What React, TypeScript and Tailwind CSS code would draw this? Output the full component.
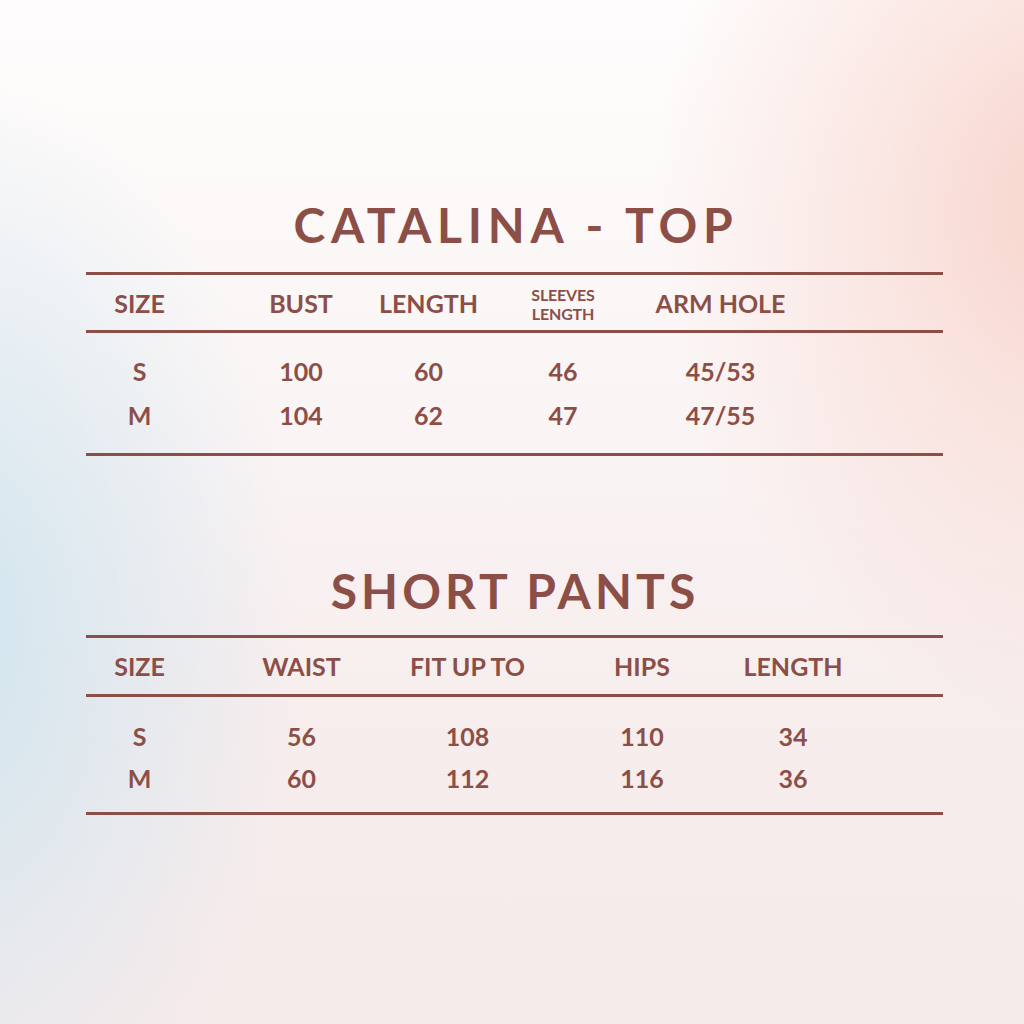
import React from "react";

const C = "text-[#8b4f48]";

function Line() {
  return <div className="h-[3px] w-full bg-[#8b4f48]" />;
}

function Cell({ children }: { children: React.ReactNode }) {
  return <div className="flex justify-center whitespace-nowrap">{children}</div>;
}

type TableProps = {
  cols: string;
  headers: React.ReactNode[];
  rows: string[][];
  headerH: string;
  bodyPt: string;
  bodyPb: string;
  rowH: string;
};

function SizeTable({ cols, headers, rows, headerH, bodyPt, bodyPb, rowH }: TableProps) {
  return (
    <div className="w-[857px] ml-[86px] flex flex-col">
      <Line />
      <div className={`grid ${cols} ${headerH} items-center text-[25px] font-bold pt-[2px]`}>
        {headers.map((h, i) => (
          <Cell key={i}>{h}</Cell>
        ))}
      </div>
      <Line />
      <div className={`flex flex-col ${bodyPt} ${bodyPb}`}>
        {rows.map((r, i) => (
          <div key={i} className={`grid ${cols} ${rowH} items-center text-[25px] font-bold`}>
            {r.map((v, j) => (
              <Cell key={j}>{v}</Cell>
            ))}
          </div>
        ))}
      </div>
      <Line />
    </div>
  );
}

export default function App() {
  return (
    <div
      className={`w-[1024px] h-[1024px] overflow-hidden font-['Lato',sans-serif] ${C} bg-[radial-gradient(420px_520px_at_105%_20%,#f8d3cb_0%,rgba(248,211,203,0.55)_40%,rgba(248,211,203,0)_100%),radial-gradient(360px_560px_at_-6%_62%,#cfe5ef_0%,rgba(207,229,239,0.55)_45%,rgba(207,229,239,0)_100%),linear-gradient(to_bottom,#fefcfc_0%,#fbf6f6_35%,#f7eded_70%,#f6ebeb_100%)]`}
    >
      <div className="pt-[201px] flex flex-col">
        <div className="h-[48px] leading-[48px] text-[48px] font-bold tracking-[0.12em] text-center pl-[8px]">
          CATALINA - TOP
        </div>
        <div className="mt-[23px]">
          <SizeTable
            cols="grid-cols-[107px_216px_39px_230px_85px_1fr]"
            headers={[
              "SIZE",
              "BUST",
              "LENGTH",
              <div className="flex flex-col items-center text-[16px] leading-[19px] tracking-[-0.01em]">
                <span>SLEEVES</span>
                <span>LENGTH</span>
              </div>,
              "ARM HOLE",
              "",
            ]}
            rows={[
              ["S", "100", "60", "46", "45/53", ""],
              ["M", "104", "62", "47", "47/55", ""],
            ]}
            headerH="h-[55px]"
            bodyPt="pt-[17px]"
            bodyPb="pb-[15px]"
            rowH="h-[44px]"
          />
        </div>
        <div className="mt-[111px] h-[48px] leading-[48px] text-[48px] font-bold tracking-[0.085em] text-center pl-[6px]">
          SHORT PANTS
        </div>
        <div className="mt-[20px]">
          <SizeTable
            cols="grid-cols-[107px_217px_115px_234px_68px_1fr]"
            headers={["SIZE", "WAIST", "FIT UP TO", "HIPS", "LENGTH", ""]}
            rows={[
              ["S", "56", "108", "110", "34", ""],
              ["M", "60", "112", "116", "36", ""],
            ]}
            headerH="h-[56px]"
            bodyPt="pt-[19px]"
            bodyPb="pb-[12px]"
            rowH="h-[42px]"
          />
        </div>
      </div>
    </div>
  );
}
